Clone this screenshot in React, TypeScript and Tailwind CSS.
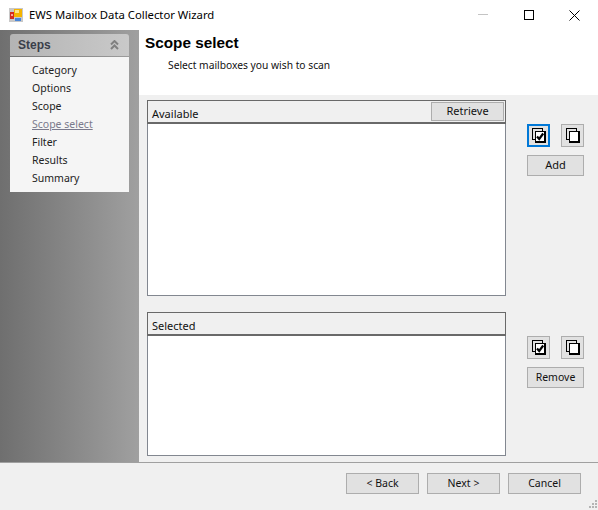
const font = { fontFamily: '"Liberation Sans", sans-serif' };
const uiFont = { fontFamily: '"Noto Sans", sans-serif' };

const steps = ['Category', 'Options', 'Scope', 'Scope select', 'Filter', 'Results', 'Summary'];

function WinButton({ label, width, height = 'h-[21px]', size = 'text-[10.500px] pb-[1px]' }: { label: string; width: string; height?: string; size?: string }) {
  return (
    <button
      type="button"
      style={uiFont}
      className={`${width} ${height} ${size} flex items-center justify-center border border-[#adadad] bg-[#e1e1e1] leading-none text-[#111]`}
    >
      {label}
    </button>
  );
}

function StackIcon({ checked }: { checked?: boolean }) {
  return (
    <svg width="14" height="15" viewBox="0 0 14 15" fill="none" shapeRendering="crispEdges">
      <rect x=".5" y=".5" width="10" height="11" stroke="#000" />
      <rect x="3" y="3" width="10" height="11" fill="#fff" />
      <path d="M3.500 14V3.500H13" stroke="#000" />
      <path d="M3 14h11M13 3v12" stroke="#000" strokeWidth="2" />
      {checked && <path d="M5 8.500l2.200 2.500 4-5.500" stroke="#000" strokeWidth="2.200" shapeRendering="auto" />}
    </svg>
  );
}

function IconButton({ focused, children }: { focused?: boolean; children: React.ReactNode }) {
  return (
    <button
      type="button"
      className={`flex h-[23px] w-[23px] items-center justify-center bg-[#e1e1e1] ${focused ? 'border-2 border-[#0078d7]' : 'border border-[#adadad]'}`}
    >
      {children}
    </button>
  );
}

function ListPanel({ title, listHeight, action }: { title: string; listHeight: string; action?: React.ReactNode }) {
  return (
    <div className="w-[359px]">
      <div style={uiFont} className="relative flex h-[24px] items-end border-x border-t border-b-2 border-[#696969] bg-[#f0f0f0] pb-[1px] pl-[4px] text-[11px] leading-[14px] text-[#111]">
        {title}
        {action && <div className="absolute top-[1px] right-[1px]">{action}</div>}
      </div>
      <div className={`${listHeight} border-x border-b border-[#828790] bg-white`} />
    </div>
  );
}

function SideActions({ label, focused, size }: { label: string; focused?: boolean; size?: string }) {
  return (
    <div className="flex w-[57px] flex-col gap-[8px]">
      <div className="flex justify-between">
        <IconButton focused={focused}>
          <StackIcon checked />
        </IconButton>
        <IconButton>
          <StackIcon />
        </IconButton>
      </div>
      <WinButton label={label} width="w-[57px]" size={size} />
    </div>
  );
}

export default function App() {
  return (
    <div className="relative flex h-[510px] w-[598px] flex-col overflow-hidden bg-[#f0f0f0]" style={font}>
      <header className="flex h-[30px] shrink-0 items-center bg-white">
        <svg className="ml-[9px]" width="14" height="14" viewBox="0 0 14 14" shapeRendering="crispEdges">
          <rect width="14" height="14" fill="#c8c8c8" />
          <rect x="5" y="1" width="8" height="8" fill="#f5b400" />
          <rect x="6" y="2" width="4" height="3" fill="#fde58a" />
          <rect x="1" y="4" width="4" height="7" fill="#d52b1e" />
          <rect x="2" y="6" width="2" height="2" fill="#f7a59c" />
          <rect x="6" y="10" width="6" height="3" fill="#4a86d8" />
        </svg>
        <span style={uiFont} className="ml-[6px] text-[11.300px] leading-none text-black">EWS Mailbox Data Collector Wizard</span>
        <div className="ml-auto flex items-center">
          <svg width="10" height="2" viewBox="0 0 10 2" className="mr-[36px]">
            <rect width="10" height="1" fill="#c4c4c4" />
          </svg>
          <svg width="10" height="10" viewBox="0 0 10 10" fill="none" className="mr-[35px]" shapeRendering="crispEdges">
            <rect x=".5" y=".5" width="9" height="9" stroke="#000" />
          </svg>
          <svg width="11" height="11" viewBox="0 0 11 11" fill="none" className="mr-[18px]">
            <path d="M.5.5l10 10M10.500.5l-10 10" stroke="#000" />
          </svg>
        </div>
      </header>

      <div className="flex min-h-0 flex-1">
        <aside className="w-[139px] shrink-0 bg-gradient-to-r from-[#6f6f6f] to-[#a0a0a0] pt-[4px] pl-[10px]">
          <div className="w-[119px]">
            <div className="flex h-[22px] items-center justify-between rounded-t-[3px] bg-gradient-to-r from-[#b4b4b4] to-[#c9c9c9] pr-[10px] pl-[8px]">
              <span className="text-[12px] font-bold text-[#3a3f4a]">Steps</span>
              <svg width="9" height="10" viewBox="0 0 9 10" fill="none">
                <path d="M1 4.500l3.500-3.500 3.500 3.500M1 9l3.500-3.500L8 9" stroke="#808080" strokeWidth="2" />
              </svg>
            </div>
            <ul style={uiFont} className="mt-[1px] flex h-[135px] flex-col bg-[#f5f5f5] pt-[4px] pl-[22px] text-[10.500px] leading-[18px] text-[#222]">
              {steps.map((s) => (
                <li key={s} className={s === 'Scope select' ? 'text-[#7a7a8c] underline' : ''}>
                  {s}
                </li>
              ))}
            </ul>
          </div>
        </aside>

        <main className="flex min-w-0 flex-1 flex-col">
          <div className="h-[65px] shrink-0 bg-white pt-[4px] pl-[6px]">
            <h1 className="text-[15.300px] leading-[17px] font-bold text-black">Scope select</h1>
            <p style={uiFont} className="mt-[7px] ml-[23px] text-[10.250px] leading-[14px] text-[#111]">Select mailboxes you wish to scan</p>
          </div>

          <div className="flex flex-1 pt-[5px] pl-[8px]">
            <div className="flex flex-col gap-[16px]">
              <ListPanel
                title="Available"
                listHeight="h-[172px]"
                action={<WinButton label="Retrieve" width="w-[73px]" height="h-[19px]" size="text-[11px] pb-[2px]" />}
              />
              <ListPanel title="Selected" listHeight="h-[120px]" />
            </div>
            <div className="ml-[21px] flex flex-col gap-[160px] pt-[24px]">
              <SideActions label="Add" focused size="text-[11px] pb-[2px]" />
              <SideActions label="Remove" />
            </div>
          </div>
        </main>
      </div>

      <footer className="flex h-[48px] shrink-0 justify-end gap-[8px] border-t border-[#a0a0a0] pt-[10px] pr-[17px]">
        <WinButton label="< Back" width="w-[73px]" />
        <WinButton label="Next >" width="w-[73px]" />
        <WinButton label="Cancel" width="w-[73px]" />
      </footer>

      {/* resize grip */}
      <svg className="absolute right-0 bottom-[1px]" width="10" height="9" viewBox="0 0 10 9" shapeRendering="crispEdges">
        <path d="M7 0h2v2H7zM4 3h2v2H4zM7 3h2v2H7zM1 6h2v2H1zM4 6h2v2H4zM7 6h2v2H7z" fill="#b4b4b4" />
      </svg>
    </div>
  );
}
